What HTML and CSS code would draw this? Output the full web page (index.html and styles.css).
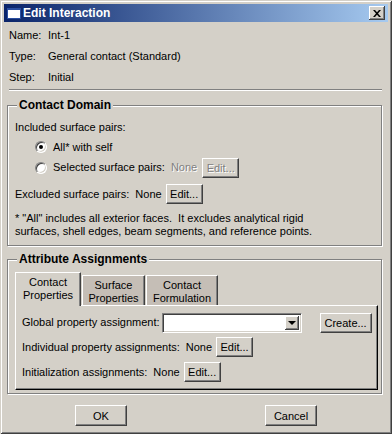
FILE: index.html
```html
<!DOCTYPE html>
<html lang="en">

<head>
  <meta charset="UTF-8" />
  <title>Edit Interaction</title>
  <link rel="stylesheet" href="styles.css">
</head>

<body>
  <div class="window">
    <div class="titlebar">
      <svg class="app-icon" width="14" height="11" viewBox="0 0 14 11">
        <rect x="0.5" y="0.5" width="13" height="10" fill="#fff" stroke="#2a4ea0" />
        <rect x="0" y="0" width="14" height="2" fill="#2a4ea0" />
      </svg>
      <span class="title">Edit Interaction</span>
      <span class="close-btn">
        <svg width="8" height="7" viewBox="0 0 8 7">
          <path d="M0 0h2l2 2.2L6 0h2L5 3.5 8 7H6L4 4.8 2 7H0l3-3.5z" fill="#000" />
        </svg>
      </span>
    </div>

    <div class="info">
      <div class="info-row"><span class="info-label">Name:</span><span>Int-1</span></div>
      <div class="info-row"><span class="info-label">Type:</span><span>General contact (Standard)</span></div>
      <div class="info-row"><span class="info-label">Step:</span><span>Initial</span></div>
    </div>
    <div class="separator"></div>

    <div class="group domain">
      <div class="group-title">Contact Domain</div>
      <div class="field-row included">Included surface pairs:</div>
      <div class="field-row radio-row"><span class="radio checked"></span>All* with self</div>
      <div class="field-row radio-row second">
        <span class="radio"></span>
        <span class="label">Selected surface pairs:</span>
        <span class="muted">None</span>
        <button class="btn edit" disabled>Edit...</button>
      </div>
      <div class="field-row excluded">
        <span class="label">Excluded surface pairs:</span>
        <span class="value">None</span>
        <button class="btn edit">Edit...</button>
      </div>
      <p class="note">* "All" includes all exterior faces.&nbsp; It excludes analytical rigid<br>surfaces, shell edges, beam segments, and reference points.</p>
    </div>

    <div class="group attrs">
      <div class="group-title">Attribute Assignments</div>
      <div class="tabs">
        <div class="tab active">Contact<br>Properties</div>
        <div class="tab surface">Surface<br>Properties</div>
        <div class="tab formulation">Contact<br>Formulation</div>
      </div>
      <div class="tab-panel">
        <div class="field-row global">
          <span class="label">Global property assignment:</span>
          <div class="combo"><span class="combo-arrow"></span></div>
          <button class="btn create">Create...</button>
        </div>
        <div class="field-row individual">
          <span class="label">Individual property assignments:</span>
          <span class="value">None</span>
          <button class="btn edit">Edit...</button>
        </div>
        <div class="field-row init">
          <span class="label">Initialization assignments:</span>
          <span class="value">None</span>
          <button class="btn edit">Edit...</button>
        </div>
      </div>
    </div>

    <div class="actions">
      <button class="btn action">OK</button>
      <button class="btn action">Cancel</button>
    </div>
  </div>
</body>

</html>
```

FILE: styles.css
```css
* {
  box-sizing: border-box;
  margin: 0;
  padding: 0;
}

body {
  font-family: 'Liberation Sans', Arial, sans-serif;
  font-size: 11px;
  line-height: 13px;
  color: #000;
  background: #d4d0c8;
}

.window {
  width: 392px;
  height: 434px;
  padding: 4px;
  background: #d4d0c8;
  box-shadow: inset 1px 1px #d4d0c8, inset -1px -1px #404040,
    inset 2px 2px #fff, inset -2px -2px #808080;
}

/* title bar */
.titlebar {
  height: 18px;
  display: flex;
  align-items: center;
  padding: 0 3px;
  background: linear-gradient(to right, #0a246a, #a6caf0);
  color: #fff;
  font-weight: bold;
}

.app-icon {
  margin-right: 2px;
}

.title {
  font-size: 12px;
}

.close-btn {
  margin-left: auto;
  width: 16px;
  height: 14px;
  display: flex;
  align-items: center;
  justify-content: center;
  background: #d4d0c8;
  box-shadow: inset -1px -1px #404040, inset 1px 1px #fff, inset -2px -2px #808080;
}

/* name / type / step */
.info {
  padding: 3px 0 0 5px;
}

.info-row {
  display: flex;
  height: 21px;
  align-items: center;
}

.info-label {
  width: 39px;
}

.separator {
  height: 2px;
  margin: 1px 6px 0 5px;
  border-top: 1px solid #808080;
  border-bottom: 1px solid #fff;
}

/* group boxes */
.group {
  margin: 14px 6px 0 3px;
  border: 1px solid #808080;
  box-shadow: inset 1px 1px #fff, 1px 1px #fff;
  padding: 0 3px 7px 7px;
}

.group-title {
  width: fit-content;
  margin: -7px 0 0 2px;
  padding: 0 2px;
  background: #d4d0c8;
  font-weight: bold;
  font-size: 12px;
}

.field-row {
  display: flex;
  align-items: center;
  height: 20px;
  white-space: nowrap;
}

.included {
  margin-top: 5px;
}

.radio-row {
  padding-left: 20px;
}

.radio-row.second {
  height: 21px;
}

.radio {
  width: 12px;
  height: 12px;
  margin-right: 6px;
  border-radius: 50%;
  background: #fff;
  border: 1px solid;
  border-color: #808080 #fff #fff #808080;
  box-shadow: inset 1px 1px #404040, inset -1px -1px #d4d0c8;
  display: flex;
  align-items: center;
  justify-content: center;
}

.radio.checked::after {
  content: "";
  width: 4px;
  height: 4px;
  border-radius: 50%;
  background: #000;
}

.label {
  margin-right: 6px;
}

.value {
  margin-right: 4px;
}

.muted {
  color: #808080;
  text-shadow: 1px 1px #fff;
  margin-right: 5px;
}

.excluded {
  margin-top: 6px;
}

.note {
  margin-top: 8px;
}

/* buttons */
.btn {
  font: inherit;
  color: #000;
  height: 20px;
  background: #d4d0c8;
  border: 1px solid;
  border-color: #fff #404040 #404040 #fff;
  box-shadow: inset -1px -1px #808080;
  padding-top: 1px;
}

.btn:disabled {
  color: #808080;
  text-shadow: 1px 1px #fff;
}

.btn.edit {
  width: 37px;
}

.btn.create {
  width: 52px;
  margin-left: 18px;
}

/* tabs */
.attrs {
  margin-top: 13px;
  padding-bottom: 3px;
}

.tabs {
  display: flex;
  align-items: flex-end;
  margin-top: 6px;
  height: 33px;
}

.tab {
  height: 30px;
  padding-top: 3px;
  text-align: center;
  background: #c5beb6;
  border-top: 1px solid #fff;
  border-left: 1px solid #fff;
  box-shadow: inset -1px 0 #808080;
  border-right: 1px solid #404040;
}

.tab.active {
  position: relative;
  z-index: 1;
  height: 34px;
  margin-bottom: -1px;
  width: 66px;
  background: #d4d0c8;
}

.tab.surface {
  width: 63px;
  margin-left: 1px;
}

.tab.formulation {
  width: 72px;
  margin-left: 1px;
}

.tab-panel {
  border: 1px solid;
  border-color: #fff #000 #000 #fff;
  box-shadow: inset -1px -1px #808080;
  padding: 0 0 7px 6px;
}

.global {
  margin-top: 6px;
  height: 21px;
}

.global .label {
  margin-right: 2px;
}

.combo {
  width: 140px;
  height: 20px;
  background: #fff;
  border: 1px solid;
  border-color: #808080 #fff #fff #808080;
  box-shadow: inset 1px 1px #404040, inset -1px -1px #d4d0c8;
  display: flex;
  justify-content: flex-end;
  padding: 2px;
}

.combo-arrow {
  width: 14px;
  height: 14px;
  background: #d4d0c8;
  box-shadow: inset -1px -1px #404040, inset 1px 1px #fff, inset -2px -2px #808080;
  display: flex;
  align-items: center;
  justify-content: center;
}

.combo-arrow::after {
  content: "";
  border-left: 4px solid transparent;
  border-right: 4px solid transparent;
  border-top: 4px solid #000;
}

.individual {
  margin-top: 4px;
}

.init {
  margin-top: 5px;
}

/* OK / Cancel */
.actions {
  display: flex;
  justify-content: center;
  gap: 138px;
  margin-top: 11px;
}

.btn.action {
  width: 52px;
  height: 21px;
}
```
